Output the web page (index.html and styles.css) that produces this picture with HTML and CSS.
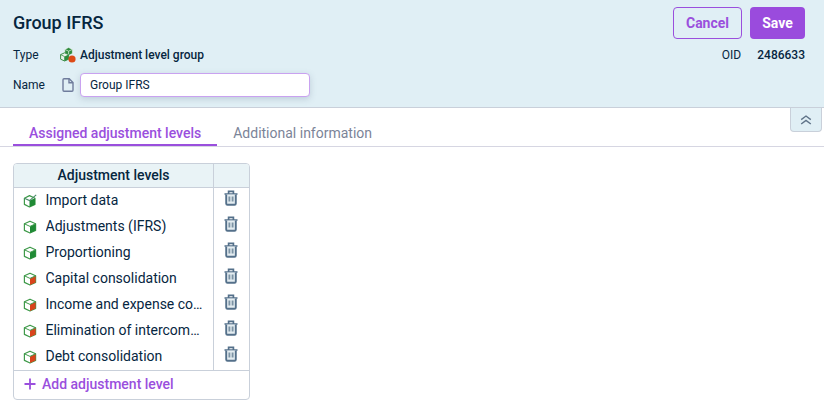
FILE: index.html
```html
<!DOCTYPE html>
<html lang="en">
<head>
<meta charset="utf-8">
<title>Group IFRS</title>
<link rel="stylesheet" href="styles.css">
</head>
<body>
<svg class="defs" width="0" height="0" aria-hidden="true">
  <defs>
    <symbol id="cube" viewBox="0 0 14 14">
      <path d="M7 1.2 12.6 3.8V10.4L7 13 1.4 10.4V3.8Z" fill="#fff" stroke="#3f9a4a" stroke-width="1.2" stroke-linejoin="round"/>
      <path d="M7 6.4 12.6 3.8V10.4L7 13Z" fill="#1f8a35"/>
      <path d="M1.4 3.8 7 6.4 12.6 3.8" fill="none" stroke="#3f9a4a" stroke-width="1"/>
    </symbol>
    <symbol id="cube-red" viewBox="0 0 14 14">
      <path d="M7 1.2 12.6 3.8V10.4L7 13 1.4 10.4V3.8Z" fill="#fff" stroke="#3f9a4a" stroke-width="1.2" stroke-linejoin="round"/>
      <path d="M7 6.4 12.6 3.8V10.4L7 13Z" fill="#d9441c"/>
      <path d="M1.4 3.8 7 6.4 12.6 3.8" fill="none" stroke="#3f9a4a" stroke-width="1"/>
    </symbol>
    <symbol id="cube-check" viewBox="0 0 14 14">
      <path d="M6.5 1.6 12 4.2V10.4L6.5 13 1.4 10.4V4.2Z" fill="#fff" stroke="#3f9a4a" stroke-width="1.2" stroke-linejoin="round"/>
      <path d="M6.5 6.6 12 4.2V10.4L6.5 13Z" fill="#1f8a35"/>
      <path d="M1.4 4.2 6.5 6.6 13.2 .8" fill="none" stroke="#4a8a6a" stroke-width="1.1"/>
    </symbol>
    <symbol id="trash" viewBox="0 0 14 16">
      <path d="M.5 4H13.5M4.6 3.6V1.3H9.4V3.6" fill="none" stroke="#54708a" stroke-width="1.7"/>
      <path d="M2.2 4.4V13.4C2.2 14.2 2.7 14.7 3.5 14.7H10.5C11.3 14.7 11.8 14.2 11.8 13.4V4.4" fill="#e4edf1" stroke="#54708a" stroke-width="1.9"/>
      <path d="M5.4 6.6V11.4M8.6 6.6V11.4" stroke="#7c93a4" stroke-width="1.9"/>
    </symbol>
  </defs>
</svg>
<header class="head">
  <div class="title-row">
    <h1 class="title">Group IFRS</h1>
    <div class="actions">
      <button class="btn btn-ghost" type="button">Cancel</button>
      <button class="btn btn-solid" type="button">Save</button>
    </div>
  </div>
  <div class="type-row">
    <span class="label">Type</span>
    <svg class="type-icon" viewBox="0 0 16 16" width="16" height="16" aria-hidden="true">
      <path d="M8.6 .6 12.4 2.4V6.6L8.6 8.4 4.8 6.6V2.4Z" fill="#2e8b3d" stroke="#fff" stroke-width=".5"/>
      <path d="M4.8 2.4 8.6 4.2 12.4 2.4M8.6 4.2V8.4" fill="none" stroke="#d5ead8" stroke-width=".8"/>
      <path d="M4.6 5.8 8.6 7.6V12.2L4.6 14 .6 12.2V7.6Z" fill="#e8f2ea" stroke="#3f8f4c" stroke-width="1"/>
      <path d="M4.6 9.6 8.6 7.6V12.2L4.6 14Z" fill="#2e8b3d"/>
      <path d="M.6 7.6 4.6 9.6V14" fill="none" stroke="#3f8f4c" stroke-width=".8"/>
      <circle cx="12" cy="12" r="3.6" fill="#dd4a17"/>
    </svg>
    <span class="type-value">Adjustment level group</span>
    <span class="oid-label">OID</span>
    <span class="oid-value">2486633</span>
  </div>
  <div class="name-row">
    <span class="label">Name</span>
    <svg class="doc-icon" viewBox="0 0 12 14" width="12" height="14" aria-hidden="true">
      <path d="M1 1.8C1 1.2 1.4 .8 2 .8H7.2L11 4.6V12C11 12.7 10.6 13.2 10 13.2H2C1.4 13.2 1 12.7 1 12Z" fill="none" stroke="#6f7c9c" stroke-width="1.4"/>
      <path d="M7 .8V4.8H11" fill="none" stroke="#6f7c9c" stroke-width="1.4"/>
    </svg>
    <input class="name-input" type="text" value="Group IFRS">
  </div>
</header>
<div class="tabs-wrap">
  <nav class="tabs">
    <span class="tab tab-on">Assigned adjustment levels</span>
    <span class="tab">Additional information</span>
  </nav>
  <button class="collapse" type="button" aria-label="Collapse">
    <svg viewBox="0 0 12 10" width="12" height="10" aria-hidden="true">
      <path d="M1.2 4.6 6 1 10.8 4.6M1.2 9 6 5.4 10.8 9" fill="none" stroke="#5f7388" stroke-width="1.4"/>
    </svg>
  </button>
</div>
<section class="panel">
  <div class="grid-head">
    <div class="col-main">Adjustment levels</div>
    <div class="col-side"></div>
  </div>
  <div class="rows">
    <div class="row"><svg class="cube"><use href="#cube-check"/></svg><span class="row-text">Import data</span><span class="row-side"><svg class="trash"><use href="#trash"/></svg></span></div>
    <div class="row"><svg class="cube"><use href="#cube"/></svg><span class="row-text">Adjustments (IFRS)</span><span class="row-side"><svg class="trash"><use href="#trash"/></svg></span></div>
    <div class="row"><svg class="cube"><use href="#cube"/></svg><span class="row-text">Proportioning</span><span class="row-side"><svg class="trash"><use href="#trash"/></svg></span></div>
    <div class="row"><svg class="cube"><use href="#cube-red"/></svg><span class="row-text">Capital consolidation</span><span class="row-side"><svg class="trash"><use href="#trash"/></svg></span></div>
    <div class="row"><svg class="cube"><use href="#cube-red"/></svg><span class="row-text">Income and expense consolidation</span><span class="row-side"><svg class="trash"><use href="#trash"/></svg></span></div>
    <div class="row"><svg class="cube"><use href="#cube-red"/></svg><span class="row-text">Elimination of intercompany profit</span><span class="row-side"><svg class="trash"><use href="#trash"/></svg></span></div>
    <div class="row"><svg class="cube"><use href="#cube-red"/></svg><span class="row-text">Debt consolidation</span><span class="row-side"><svg class="trash"><use href="#trash"/></svg></span></div>
  </div>
  <div class="add">
    <svg viewBox="0 0 12 12" width="12" height="12" aria-hidden="true"><path d="M6 .5V11.5M.5 6H11.5" stroke="#9a4fdd" stroke-width="1.8"/></svg>
    <span>Add adjustment level</span>
  </div>
</section>
</body>
</html>
```
FILE: styles.css
```css
* { box-sizing: border-box; }
html, body { margin: 0; padding: 0; }
body {
  width: 824px;
  height: 403px;
  overflow: hidden;
  background: #fff;
  color: #06263f;
  font-family: Roboto, "Liberation Sans", sans-serif;
  font-size: 12px;
}
.defs { position: absolute; }
.head {
  height: 108px;
  padding: 7px 19px 0 13px;
  background: #e0eff5;
  border-bottom: 1px solid #c9d0da;
}
.title-row { display: flex; justify-content: space-between; align-items: flex-start; height: 32px; }
.title { margin: 0; font-size: 18px; font-weight: 500; line-height: 32px; }
.actions { display: flex; gap: 8px; }
.btn {
  width: 69px;
  height: 32px;
  border-radius: 4px;
  font-family: inherit;
  font-size: 14px;
  font-weight: 700;
  padding: 0;
}
.btn-ghost { background: transparent; border: 1px solid #9a4fdd; color: #9a4fdd; }
.btn-solid { width: 55px; background: #9a4bdd; border: 0; color: #fff; }
.type-row { display: flex; align-items: center; height: 16px; margin-top: 8px; }
.label { width: 47px; }
.type-icon { margin-right: 4px; }
.type-value { font-weight: 500; flex: 1; }
.oid-label { margin-right: 16px; }
.oid-value { font-weight: 500; }
.name-row { display: flex; align-items: center; height: 24px; margin-top: 10px; }
.doc-icon { margin: 0 6px 0 2px; }
.name-input {
  width: 230px;
  height: 24px;
  padding: 0 9px;
  border: 1px solid #c9a2f0;
  border-radius: 4px;
  background: #fff;
  color: #06263f;
  font-family: inherit;
  font-size: 12px;
  outline: none;
  box-shadow: 0 2px 6px rgba(90, 110, 140, .25);
}
.tabs-wrap {
  display: flex;
  justify-content: space-between;
  align-items: flex-start;
  height: 39px;
  padding-left: 13px;
  padding-right: 2px;
  border-bottom: 1px solid #d6d6e2;
}
.tabs { display: flex; margin-top: 13px; }
.tab {
  height: 25px;
  padding: 3px 16px 0;
  font-size: 14px;
  line-height: 18px;
  color: #7b8498;
}
.tab-on {
  color: #9a4fdd;
  font-weight: 500;
  border-bottom: 2px solid #9a4fdd;
}
.collapse {
  display: flex;
  align-items: center;
  justify-content: center;
  width: 32px;
  height: 24px;
  padding: 0;
  background: #e0eff5;
  border: 1px solid #c9d0da;
  border-top: 0;
  border-radius: 0 0 4px 4px;
}
.panel {
  width: 237px;
  margin: 16px 0 0 13px;
  border: 1px solid #c9d0da;
  border-radius: 4px;
  overflow: hidden;
}
.grid-head {
  display: flex;
  height: 24px;
  background: #e9f3f6;
  border-bottom: 1px solid #c9d0da;
  font-size: 14px;
  font-weight: 500;
  line-height: 23px;
}
.col-main { width: 200px; text-align: center; border-right: 1px solid #c9d0da; }
.col-side { flex: 1; }
.rows { border-bottom: 1px solid #c9d0da; }
.row { display: flex; align-items: center; height: 26px; padding: 0 0 2px 9px; }
.cube { width: 14px; height: 14px; flex: none; margin-top: 1px; }
.row-text {
  width: 158px;
  margin-left: 8.5px;
  font-size: 14px;
  white-space: nowrap;
  overflow: hidden;
  text-overflow: ellipsis;
}
.row-side {
  display: flex;
  justify-content: center;
  align-items: flex-start;
  width: 36px;
  height: 26px;
  margin: 0 0 -2px auto;
  padding: 2px 2px 0 0;
  border-left: 1px solid #c9d0da;
}
.trash { width: 14px; height: 16px; }
.add {
  display: flex;
  align-items: center;
  gap: 6px;
  height: 28px;
  padding: 0 0 2px 10px;
  color: #9a4fdd;
  font-size: 14px;
  font-weight: 500;
}
```
